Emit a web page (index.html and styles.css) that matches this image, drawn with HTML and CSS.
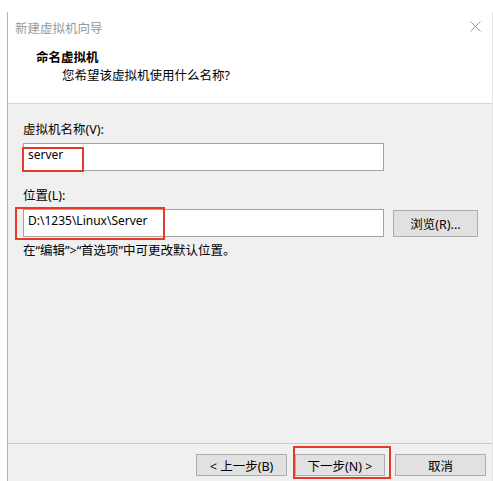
FILE: index.html
```html
<!DOCTYPE html>
<html lang="zh-CN">
<head>
    <meta charset="UTF-8">
    <title>新建虚拟机向导</title>
    <link rel="stylesheet" href="styles.css">
</head>
<body>
    <div class="window">
        <div class="titlebar">
            <span class="title">新建虚拟机向导</span>
            <svg class="close" width="11" height="11" viewBox="0 0 11 11">
                <path d="M0.5 0.5 L10.5 10.5 M10.5 0.5 L0.5 10.5" stroke="#9a9a9a" stroke-width="1" fill="none"/>
            </svg>
        </div>

        <div class="header">
            <div class="step">命名虚拟机</div>
            <div class="question">您希望该虚拟机使用什么名称?</div>
        </div>

        <div class="content">
            <label class="label">虚拟机名称(V):</label>
            <div class="field name-field">
                <div class="textbox">server</div>
                <span class="mark mark-name"></span>
            </div>

            <label class="label label-loc">位置(L):</label>
            <div class="row">
                <div class="field loc-field">
                    <div class="textbox">D:\1235\Linux\Server</div>
                    <span class="mark mark-loc"></span>
                </div>
                <button class="btn browse">浏览(R)...</button>
            </div>
            <div class="hint">在“编辑”&gt;“首选项”中可更改默认位置。</div>
        </div>

        <div class="footer">
            <button class="btn back">&lt; 上一步(B)</button>
            <div class="next-wrap">
                <button class="btn next">下一步(N) &gt;</button>
                <span class="mark mark-next"></span>
            </div>
            <button class="btn cancel">取消</button>
        </div>
    </div>
</body>
</html>
```

FILE: styles.css
```css
body {
    margin: 0;
    background: #fff;
    font-family: "Noto Sans", "Noto Sans CJK SC", sans-serif;
    font-size: 12.5px;
    color: #000;
}
.window {
    margin: 12px 0 0 7px;
    height: 469px;
    border-left: 1px solid #b4b4b4;
    border-right: 1px solid #e4e4e4;
    display: flex;
    flex-direction: column;
    background: #f0f0f0;
}
.titlebar {
    height: 30px;
    background: #fff;
    display: flex;
    align-items: center;
    justify-content: space-between;
    padding: 0 11px 0 7px;
}
.title {
    color: #999;
}
.close {
    margin-top: -1px;
}
.header {
    height: 62px;
    background: #fff;
    border-bottom: 1px solid #d5d5d5;
    padding: 7px 0 0 28px;
    box-sizing: border-box;
}
.step {
    font-weight: bold;
    line-height: 18px;
}
.question {
    line-height: 18px;
    margin-left: 26px;
}
.content {
    flex: 1;
    padding: 18px 0 0 15px;
    display: flex;
    flex-direction: column;
}
.label {
    line-height: 16px;
    margin-bottom: 5px;
}
.label-loc {
    margin-top: 17px;
    margin-bottom: 4px;
}
.field {
    position: relative;
}
.textbox {
    width: 361px;
    height: 28px;
    box-sizing: border-box;
    background: #fff;
    border: 1px solid #a3a3a3;
    padding: 2px 0 0 4px;
    font-size: 12px;
    line-height: 18px;
}
.row {
    display: flex;
    align-items: center;
    gap: 9px;
}
.btn {
    font-family: inherit;
    font-size: 12.5px;
    background: #e1e1e1;
    border: 1px solid #adadad;
    height: 22px;
    padding: 0;
    color: #000;
}
.browse {
    width: 85px;
    height: 27px;
    margin-top: 2px;
}
.hint {
    margin-top: 6px;
    line-height: 16px;
}
.footer {
    height: 38px;
    border-top: 1px solid #c9c9c9;
    display: flex;
    align-items: flex-start;
    padding: 10px 0 0 188px;
    box-sizing: border-box;
}
.back {
    width: 91px;
}
.next-wrap {
    position: relative;
    margin-left: 8px;
}
.next {
    width: 90px;
}
.cancel {
    width: 91px;
    margin-left: 10px;
}
.mark {
    position: absolute;
    border: 2px solid #e8392a;
    box-sizing: border-box;
    pointer-events: none;
}
.mark-name {
    left: -1px;
    top: 4px;
    width: 62px;
    height: 25px;
}
.mark-loc {
    left: -8px;
    top: -2px;
    width: 150px;
    height: 33px;
}
.mark-next {
    left: -2px;
    top: -8px;
    width: 98px;
    height: 33px;
}
```
